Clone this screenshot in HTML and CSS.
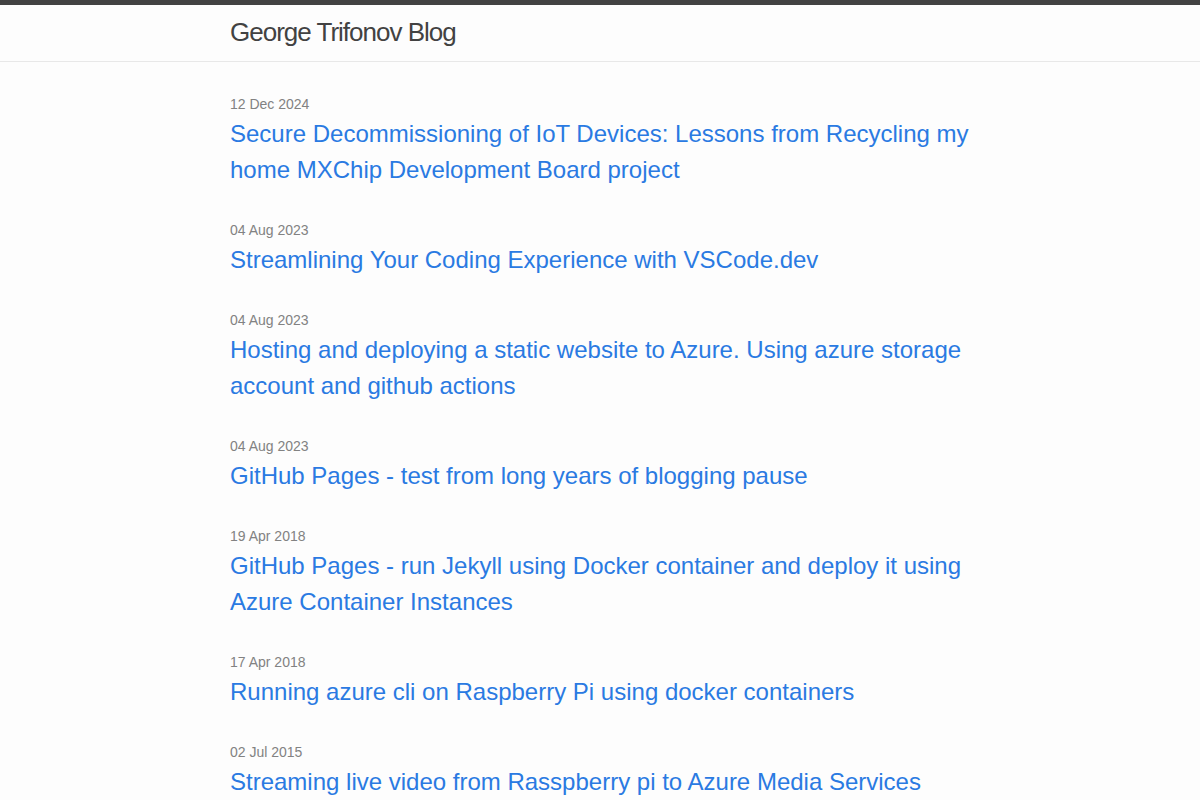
FILE: index.html
```html
<!DOCTYPE html>
<html lang="en">
<head>
  <meta charset="UTF-8" />
  <meta name="viewport" content="width=device-width, initial-scale=1.0"/>
  <title>George Trifonov Blog</title>
  <link rel="stylesheet" href="styles.css">
</head>
<body>
  <header class="site-header">
    <div class="wrapper">
      <a class="site-title" href="#">George Trifonov Blog</a>
    </div>
  </header>

  <main class="page-content">
    <div class="wrapper">
      <ul class="post-list">
        <li>
          <span class="post-meta">12 Dec 2024</span>
          <h3><a class="post-link" href="#">Secure Decommissioning of IoT Devices: Lessons from Recycling my home MXChip Development Board project</a></h3>
        </li>
        <li>
          <span class="post-meta">04 Aug 2023</span>
          <h3><a class="post-link" href="#">Streamlining Your Coding Experience with VSCode.dev</a></h3>
        </li>
        <li>
          <span class="post-meta">04 Aug 2023</span>
          <h3><a class="post-link" href="#">Hosting and deploying a static website to Azure. Using azure storage account and github actions</a></h3>
        </li>
        <li>
          <span class="post-meta">04 Aug 2023</span>
          <h3><a class="post-link" href="#">GitHub Pages - test from long years of blogging pause</a></h3>
        </li>
        <li>
          <span class="post-meta">19 Apr 2018</span>
          <h3><a class="post-link" href="#">GitHub Pages - run Jekyll using Docker container and deploy it using Azure Container Instances</a></h3>
        </li>
        <li>
          <span class="post-meta">17 Apr 2018</span>
          <h3><a class="post-link" href="#">Running azure cli on Raspberry Pi using docker containers</a></h3>
        </li>
        <li>
          <span class="post-meta">02 Jul 2015</span>
          <h3><a class="post-link" href="#">Streaming live video from Rasspberry pi to Azure Media Services</a></h3>
        </li>
      </ul>
    </div>
  </main>
</body>
</html>
```

FILE: styles.css
```css
* {
  box-sizing: border-box;
}

body {
  margin: 0;
  font-family: "Liberation Sans", Arial, sans-serif;
  font-size: 16px;
  line-height: 1.5;
  color: #111;
  background-color: #fdfdfd;
}

a {
  text-decoration: none;
}

.wrapper {
  max-width: 800px;
  margin: 0 auto;
  padding: 0 30px;
}

/* header */
.site-header {
  border-top: 5px solid #424242;
  border-bottom: 1px solid #e8e8e8;
  min-height: 62px;
}

.site-title {
  font-size: 26px;
  font-weight: 300;
  line-height: 54px;
  letter-spacing: -1px;
  color: #424242;
}

/* post list */
.page-content {
  padding: 32px 0;
}

.post-list {
  list-style: none;
  margin: 0;
  padding: 0;
}

.post-list li {
  margin-bottom: 32px;
}

.post-meta {
  display: block;
  font-size: 14px;
  color: #828282;
}

.post-list h3 {
  margin: 1px 0 0;
  font-weight: 400;
}

.post-link {
  display: block;
  font-size: 24px;
  line-height: 36px;
  color: #2a7ae2;
}
```
